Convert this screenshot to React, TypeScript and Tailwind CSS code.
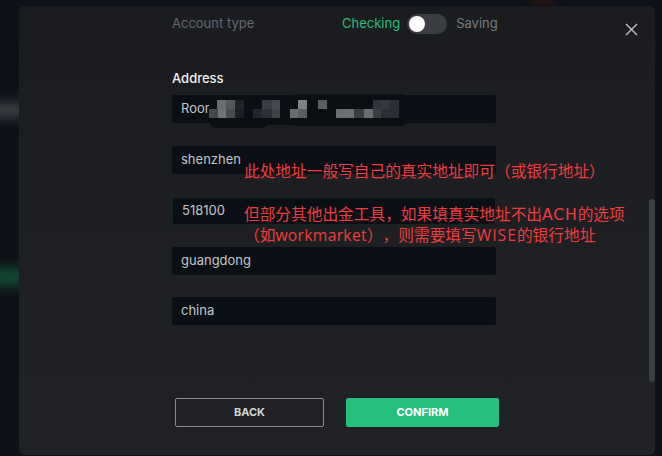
import React from "react";

const mosaic: [number, number, number, number, string][] = [
  [217, 100, 9, 9, "#6a6c70"],
  [226, 100, 9, 9, "#55575b"],
  [235, 100, 9, 9, "#202329"],
  [262, 100, 10, 9, "#3a3d44"],
  [272, 100, 8, 9, "#45484e"],
  [298, 100, 9, 9, "#808287"],
  [318, 100, 9, 9, "#5c5e63"],
  [373, 100, 8, 9, "#30333a"],
  [381, 100, 8, 9, "#35383e"],
  [389, 100, 10, 9, "#2c2f35"],
  [209, 109, 9, 9, "#45474b"],
  [218, 109, 8, 9, "#707276"],
  [226, 109, 9, 9, "#4a4c50"],
  [235, 109, 9, 9, "#1c1f25"],
  [253, 109, 9, 9, "#23262c"],
  [262, 109, 10, 9, "#2c2f35"],
  [272, 109, 8, 9, "#3f4247"],
  [290, 109, 8, 9, "#6a6c70"],
  [298, 109, 9, 9, "#5a5c60"],
  [336, 109, 9, 9, "#6b6d71"],
  [345, 109, 9, 9, "#6d6f73"],
  [354, 109, 10, 9, "#3a3c41"],
  [364, 109, 9, 9, "#6a6c70"],
  [373, 109, 8, 9, "#3a3d42"],
  [381, 109, 18, 9, "#2a2d33"],
];

function Field({ value, className = "" }: { value: string; className?: string }) {
  return (
    <div
      className={`h-[28px] w-[324px] rounded-[2px] bg-[#0a0f16] flex items-center pl-[9px] text-[13px] text-[#c4c5c7] ${className}`}
    >
      {value}
    </div>
  );
}

export default function App() {
  return (
    <div
      className="relative w-[662px] h-[456px] overflow-hidden bg-[#0e1218] pl-[19px] pt-[6px]"
      style={{ fontFamily: "Inter, 'Liberation Sans', sans-serif" }}
    >
      {/* background glows */}
      <div className="absolute left-[-20px] top-[102px] w-[50px] h-[16px] rounded-full bg-[#3a3d42] blur-[6px]" />
      <div className="absolute left-[-20px] top-[268px] w-[50px] h-[18px] rounded-full bg-[#134a33] blur-[6px]" />
      <div className="absolute left-[530px] top-[-8px] w-[24px] h-[10px] rounded-full bg-[#3a1a14] blur-[5px]" />

      {/* modal */}
      <div className="relative w-[636px] h-[449px] rounded-[6px] bg-gradient-to-b from-[#1a1c20] to-[#202226]">
        <div className="ml-[153px] w-[346px] flex flex-col pt-[8px]">
          <div className="h-[20px] flex items-center text-[13px]">
            <span className="text-[#64676c] w-[170px]">Account type</span>
            <span className="text-[#22c07a]">Checking</span>
            <div className="ml-[7px] w-[40px] h-[20px] rounded-full bg-[#3a3d42] flex items-center pl-[2px]">
              <div className="w-[16px] h-[16px] rounded-full bg-white" />
            </div>
            <span className="ml-[9px] text-[#76797e]">Saving</span>
          </div>

          <div className="mt-[36px] h-[16px] leading-[16px] text-[13px] font-medium text-[#f2f2f2]">Address</div>

          <Field value="Room" className="mt-[9px]" />
          <Field value="shenzhen" className="mt-[23px]" />
          <Field value="518100" className="mt-[23px] border border-[#12261f]" />
          <Field value="guangdong" className="mt-[22px]" />
          <Field value="china" className="mt-[22px]" />

          <div className="mt-[73px] flex gap-[22px] pl-[3px]">
            <button className="w-[149px] h-[29px] border border-[#8a8b8e] rounded-[2px] text-[11px] font-bold text-[#d4d4d6]">
              BACK
            </button>
            <button className="w-[153px] h-[29px] rounded-[2px] bg-[#24c07b] text-[11px] font-bold text-white">
              CONFIRM
            </button>
          </div>
        </div>

        {/* close */}
        <svg className="absolute left-[606px] top-[17px]" width="13" height="13" viewBox="0 0 13 13">
          <path d="M1 1 L12 12 M12 1 L1 12" stroke="#c2c3c5" strokeWidth="1.4" />
        </svg>

        {/* scrollbar */}
        <div className="absolute right-[0px] top-[193px] w-[6px] h-[183px] rounded-full bg-[#3b3e44]" />
      </div>

      {/* mosaic blur over address */}
      <svg className="absolute left-0 top-0 pointer-events-none" width="662" height="456" viewBox="0 0 662 456">
        <rect x="209" y="96" width="60" height="32" rx="8" fill="#0b0e13" />
        <rect x="290" y="94" width="118" height="32" rx="8" fill="#0b0e13" />
        <rect x="255" y="96" width="60" height="29" rx="4" fill="#0b0e13" />
        {mosaic.map(([x, y, w, h, c], i) => (
          <rect key={i} x={x} y={y} width={w} height={h} fill={c} />
        ))}
      </svg>

      {/* annotation */}
      <div
        className="absolute left-[244px] top-[160px] text-[15.7px] leading-[23px] text-[#f03c3c] whitespace-nowrap [text-spacing-trim:space-all]"
        style={{ fontFamily: "'Open Sans', 'Noto Sans CJK SC', sans-serif" }}
      >
        <div>此处地址一般写自己的真实地址即可（或银行地址）</div>
        <div className="mt-[20px]">
          但部分其他出金工具，如果填真实地址不出
          <span className="tracking-[0.8px]" style={{ fontFamily: "'DejaVu Sans', sans-serif" }}>
            ACH
          </span>
          的选项
        </div>
        <div className="mt-[-2px]">
          （如<span className="tracking-[0.3px]">workmarket</span>），则需要填写
          <span className="tracking-[1px]">WISE</span>的银行地址
        </div>
      </div>
    </div>
  );
}
